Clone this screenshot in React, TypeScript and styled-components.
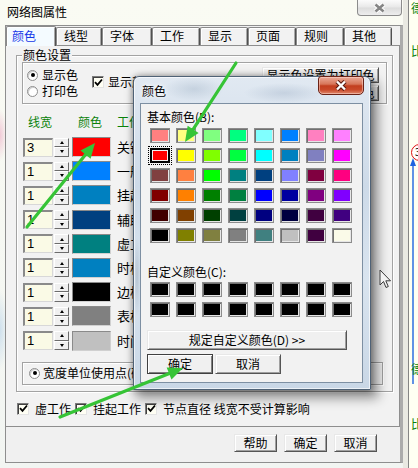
import React from "react";
import styled, { createGlobalStyle, css } from "styled-components";

const FONT = `"Noto Sans CJK SC", "Noto Sans", "DejaVu Sans", sans-serif`;

const GlobalStyle = createGlobalStyle`
  * { box-sizing: border-box; }
  html, body { margin: 0; padding: 0; }
  body { font-family: ${FONT}; font-size: 12px; color: #000; background: #F6F8F2; }
`;

const Screen = styled.div`
  position: relative;
  width: 418px;
  height: 468px;
  overflow: hidden;
  display: flex;
  align-items: flex-start;
  padding-left: 5px;
  font-family: ${FONT};
  font-size: 12px;
  line-height: 14px;
  background:
    radial-gradient(ellipse 7px 26px at 0px 135px, rgba(236, 170, 196, 0.6), transparent),
    radial-gradient(ellipse 8px 40px at 0px 330px, rgba(175, 205, 232, 0.55), transparent),
    linear-gradient(180deg, #FAFBF3, #F2F5F2);
`;

const MainWindow = styled.div`
  flex: none;
  width: 398px;
  height: 463px;
  display: flex;
  flex-direction: column;
`;

const TitleBar = styled.div`
  height: 25px;
  display: flex;
  align-items: flex-start;
  justify-content: space-between;
`;

const TitleText = styled.span`
  margin: 5px 0 0 2px;
  line-height: 14px;
`;

const InactiveClose = styled.div`
  width: 45px;
  height: 16px;
  margin-right: 1px;
  border: 1px solid #8C8C8C;
  border-top: none;
  border-radius: 0 0 4px 4px;
  background: linear-gradient(#FBFBFB, #E8E8E8 48%, #DCDCDC 52%, #EEEEEE);
  display: flex;
  align-items: center;
  justify-content: center;
`;

const Client = styled.div`
  height: 438px;
  display: flex;
  flex-direction: column;
  background: #F0F0F0;
  border-left: 1px solid #8E8E8E;
  border-top: 1px solid #8E8E8E;
  border-bottom: 1px solid #8E8E8E;
  border-right: 3px solid #ABABAB;
`;

const TabStrip = styled.div`
  height: 19px;
  display: flex;
  align-items: flex-end;
`;

const Tab = styled.div<{ $w: number; $active?: boolean }>`
  position: relative;
  flex: none;
  width: ${(p) => p.$w}px;
  height: ${(p) => (p.$active ? 20 : 18)}px;
  margin-bottom: ${(p) => (p.$active ? -1 : 0)}px;
  z-index: ${(p) => (p.$active ? 1 : 0)};
  padding: ${(p) => (p.$active ? 2 : 1)}px 0 0 ${(p) => (p.$active ? 5 : 7)}px;
  border: 1px solid #8A8A8A;
  border-right-color: #505050;
  border-bottom: none;
  border-radius: 2px 2px 0 0;
  box-shadow: inset 1px 1px #FFFFFF, inset -1px 0 #A8A8A8;
  background: ${(p) => (p.$active ? "#F4FBFF" : "#F2F2F2")};
  color: ${(p) => (p.$active ? "#1438E8" : "#000")};
  line-height: 14px;
`;

const TabPanel = styled.div`
  flex: none;
  height: 382px;
  display: flex;
  flex-direction: column;
  align-items: flex-start;
  padding: 9px 0 0 10px;
  border-top: 1px solid #8E8E8E;
  border-right: 1px solid #8E8E8E;
  border-bottom: 1px solid #8E8E8E;
  background: #F2F2F2;
`;

const etched = css`
  border: 1px solid #A3A3A3;
  box-shadow: inset 1px 1px #FFFFFF, 1px 1px #FFFFFF;
`;

const GroupBox = styled.div`
  ${etched};
  width: 377px;
  display: flex;
  flex-direction: column;
  padding-bottom: 6px;
`;

const GroupTitle = styled.span`
  align-self: flex-start;
  margin: -8px 0 0 5px;
  padding: 0 1px;
  background: #F2F2F2;
  line-height: 14px;
`;

const OptionsFrame = styled.div`
  ${etched};
  height: 42px;
  margin: 0 5px;
  display: grid;
  grid-template-columns: 65px 1fr 117px;
  padding: 4px 7px 0 4px;
`;

const RadioCol = styled.div`
  display: flex;
  flex-direction: column;
  gap: 4px;
  padding-top: 2px;
`;

const OptionLine = styled.div`
  height: 12px;
  display: flex;
  align-items: center;
  gap: 4px;
  white-space: nowrap;
  line-height: 12px;
`;

const CheckCol = styled.div`
  padding-top: 9px;
`;

const ButtonCol = styled.div`
  display: flex;
  flex-direction: column;
  gap: 2px;
`;

const RadioDot = styled.span<{ $on?: boolean }>`
  flex: none;
  width: 11px;
  height: 11px;
  border-radius: 50%;
  border: 1px solid #8E8E8E;
  background: #FFFFFF;
  box-shadow: inset 1px 1px #D0D0D0;
  display: flex;
  align-items: center;
  justify-content: center;
  &::after {
    content: "";
    width: 4px;
    height: 4px;
    border-radius: 50%;
    background: ${(p) => (p.$on ? "#000" : "transparent")};
  }
`;

const CheckBox = styled.span`
  flex: none;
  width: 12px;
  height: 12px;
  border: 1px solid;
  border-color: #7C7C7C #E4E4E4 #E4E4E4 #7C7C7C;
  box-shadow: inset 1px 1px #404040;
  background: #FFFFF4;
  display: flex;
  align-items: center;
  justify-content: center;
`;

const HeaderRow = styled.div`
  margin-top: 11px;
  padding-left: 11px;
  display: grid;
  grid-template-columns: 50px 39px auto;
  color: #0A820A;
  line-height: 13px;
`;

const RowList = styled.div`
  margin-top: 9px;
  display: flex;
  flex-direction: column;
  gap: 4.2px;
`;

const Row = styled.div`
  height: 20px;
  display: flex;
  align-items: center;
  padding-left: 6px;
`;

const NumBox = styled.div`
  width: 30px;
  height: 19px;
  border-style: solid;
  border-width: 2px 1px 1px 2px;
  border-color: #8A8A8A #D8D8D8 #D8D8D8 #8A8A8A;
  background: #FAFAE6;
  padding-left: 2px;
  font-family: "Liberation Sans", Arial, sans-serif;
  font-size: 13px;
  line-height: 16px;
`;

const Spin = styled.div`
  margin-left: 1px;
  width: 15px;
  height: 19px;
  display: flex;
  flex-direction: column;
`;

const SpinHalf = styled.div<{ $down?: boolean }>`
  flex: 1;
  background: #F0F0F0;
  border: 1px solid;
  border-color: #FFFFFF #6C6C6C #6C6C6C #FFFFFF;
  display: flex;
  align-items: center;
  justify-content: center;
  &::after {
    content: "";
    border-left: 2.5px solid transparent;
    border-right: 2.5px solid transparent;
    ${(p) => (p.$down ? "border-top: 3px solid #000;" : "border-bottom: 3px solid #000;")}
  }
`;

const ColorBox = styled.div<{ $c: string }>`
  margin-left: 3px;
  width: 39px;
  height: 20px;
  border: 1px solid;
  border-color: #8A8A8A #D0D0D0 #D0D0D0 #8A8A8A;
  background: ${(p) => p.$c};
`;

const RowLabel = styled.span`
  margin-left: 6px;
  font-size: 13px;
  white-space: nowrap;
`;

const WidthFrame = styled.div`
  ${etched};
  height: 23px;
  margin: 11px 9px 0 5px;
  display: flex;
  align-items: center;
  gap: 3px;
  padding-left: 6px;
  white-space: nowrap;
`;

const CheckRow = styled.div`
  margin: 11px 0 0 1px;
  height: 12px;
  display: flex;
  align-items: center;
  white-space: nowrap;
  line-height: 12px;
`;

const CheckItem = styled.span<{ $first?: boolean }>`
  display: flex;
  align-items: center;
  gap: 6px;
  margin-left: ${(p) => (p.$first ? 0 : 4)}px;
`;

const Footer = styled.div`
  flex: 1;
  display: flex;
  justify-content: flex-end;
  align-items: flex-start;
  gap: 7px;
  padding: 7px 23px 0 0;
`;

const Btn = styled.button<{ $w: number; $h?: number; $default?: boolean }>`
  flex: none;
  width: ${(p) => p.$w}px;
  height: ${(p) => p.$h ?? 18}px;
  padding: 0;
  font-family: ${FONT};
  font-size: 12px;
  line-height: 12px;
  color: #000;
  background: #F0F0F0;
  border: 1px solid;
  border-color: ${(p) => (p.$default ? "#404040" : "#E8E8E8 #555555 #555555 #E8E8E8")};
  box-shadow: ${(p) =>
    p.$default
      ? "inset 1px 1px #FFFFFF, inset -1px -1px #808080"
      : "inset 1px 1px #FFFFFF, inset -1px -1px #A0A0A0"};
  white-space: nowrap;
  overflow: hidden;
`;

const WideBtn = styled(Btn)`
  text-align: left;
  padding-left: 8px;
`;

/* Right-hand strip: part of the network diagram behind the dialog */
const DiagramStrip = styled.div`
  position: relative;
  flex: 1;
  height: 468px;
  background: #FFFFF2;
  box-shadow: inset 5px 0 0 #E9E9E2, inset 6px 0 0 #858585;
  overflow: hidden;
`;

const DiagramText = styled.span<{ $top: number }>`
  position: absolute;
  left: 8px;
  top: ${(p) => p.$top}px;
  color: #0A800A;
  font-size: 12px;
  line-height: 13px;
  white-space: nowrap;
`;

const NodeCircle = styled.div`
  position: absolute;
  left: 8px;
  top: 144px;
  width: 17px;
  height: 17px;
  border-radius: 50%;
  border: 1.5px solid #E01010;
  background: #FFFFFF;
  font-size: 10px;
  line-height: 14px;
  padding-left: 3px;
`;

const DiagramSvg = styled.svg`
  position: absolute;
  left: 0;
  top: 0;
`;

/* Colour picker dialog lying over the property sheet */
const ColorDialog = styled.div`
  position: absolute;
  left: 133px;
  top: 76px;
  width: 238px;
  height: 314px;
  border: 1px solid #4F6276;
  border-radius: 6px 6px 0 0;
  background:
    radial-gradient(ellipse 30px 12px at 60px 12px, rgba(150, 170, 190, 0.35), transparent),
    radial-gradient(ellipse 40px 10px at 150px 16px, rgba(140, 160, 185, 0.3), transparent),
    radial-gradient(ellipse 4px 40px at 3px 200px, rgba(120, 140, 160, 0.35), transparent),
    linear-gradient(180deg, #E1E9F2 0%, #CDDAE8 35%, #D9E4EF 65%, #C9D7E6 100%);
  box-shadow: 0 0 6px rgba(0, 0, 0, 0.35), 5px 6px 12px 2px rgba(0, 0, 0, 0.42),
    inset 0 0 0 1px rgba(255, 255, 255, 0.65);
  display: flex;
  flex-direction: column;
`;

const DialogTitleBar = styled.div`
  height: 26px;
  display: flex;
  align-items: flex-start;
  padding-left: 8px;
`;

const DialogTitle = styled.span`
  margin-top: 7px;
  line-height: 14px;
  text-shadow: 0 0 6px #FFFFFF, 0 0 3px #FFFFFF;
`;

const RedClose = styled.div`
  margin: -1px 6px 0 auto;
  width: 46px;
  height: 19px;
  border: 1px solid #6A2216;
  border-radius: 3px 3px 5px 5px;
  background: linear-gradient(180deg, #EBAA98 0%, #D77559 42%, #C23E1F 52%, #C9492A 75%, #E08A6E 100%);
  box-shadow: inset 0 0 0 1px rgba(255, 220, 210, 0.5);
  display: flex;
  align-items: center;
  justify-content: center;
`;

const DialogBody = styled.div`
  flex: 1;
  margin: 0 7px 6px 6px;
  background: #F2F2F2;
  border: 1px solid #7D8FA2;
  display: flex;
  flex-direction: column;
  align-items: flex-start;
  padding-left: 6px;
`;

const DialogLabel = styled.span<{ $gap: number }>`
  margin-top: ${(p) => p.$gap}px;
  line-height: 13px;
  white-space: nowrap;
`;

const SwatchGrid = styled.div<{ $gap: number }>`
  margin: ${(p) => p.$gap}px 0 0 3px;
  display: grid;
  grid-template-columns: repeat(8, 20px);
  grid-auto-rows: 15px;
  column-gap: 6px;
  row-gap: 5px;
`;

const Swatch = styled.div<{ $c: string; $sel?: boolean }>`
  background: ${(p) => p.$c};
  border: 1px solid ${(p) => (p.$sel ? "#000" : "#8C8C8C")};
  box-shadow: ${(p) =>
    p.$sel ? "inset 0 0 0 1px #000, inset 0 0 0 2px #F2F2F2" : "inset 1px 1px #707070, inset -1px -1px #E6E6E6"};
  outline: ${(p) => (p.$sel ? "1px dotted #000" : "none")};
  outline-offset: 1px;
`;

const DialogButtons = styled.div`
  margin-top: 4px;
  display: flex;
  gap: 2px;
`;

const Cursor = styled.svg`
  position: absolute;
  left: 379px;
  top: 269px;
`;

const Annotations = styled.svg`
  position: absolute;
  left: 0;
  top: 0;
  pointer-events: none;
`;

const basicColors = [
  ["#FF8080", "#FFFF80", "#80FF80", "#00FF80", "#80FFFF", "#0080FF", "#FF80C0", "#FF80FF"],
  ["#FF0000", "#FFFF00", "#80FF00", "#00FF40", "#00FFFF", "#0080C0", "#8080C0", "#FF00FF"],
  ["#804040", "#FF8040", "#00FF00", "#008080", "#004080", "#8080FF", "#800040", "#FF0080"],
  ["#800000", "#FF8000", "#008000", "#008040", "#0000FF", "#0000A0", "#800080", "#8000FF"],
  ["#400000", "#804000", "#004000", "#004040", "#000080", "#000040", "#400040", "#400080"],
  ["#000000", "#808000", "#808040", "#808080", "#408080", "#C0C0C0", "#400040", "#FAFAE8"],
];

const rows = [
  { w: "3", c: "#FF0000", l: "关键工作" },
  { w: "1", c: "#0080FF", l: "一般工作" },
  { w: "1", c: "#0080C0", l: "挂起工作" },
  { w: "1", c: "#004080", l: "辅助工作" },
  { w: "1", c: "#008080", l: "虚工作" },
  { w: "1", c: "#0080C0", l: "时标线" },
  { w: "1", c: "#000000", l: "边框线" },
  { w: "1", c: "#808080", l: "表格线" },
  { w: "1", c: "#C0C0C0", l: "时间刻度" },
];

const tabs = [
  { t: "颜色", w: 50 },
  { t: "线型", w: 46 },
  { t: "字体", w: 50 },
  { t: "工作", w: 48 },
  { t: "显示", w: 48 },
  { t: "页面", w: 48 },
  { t: "规则", w: 48 },
  { t: "其他", w: 48 },
];

const Check = () => (
  <svg width="9" height="9" viewBox="0 0 9 9">
    <path d="M1 4.2 L3.5 6.8 L8 1.5" fill="none" stroke="#000" strokeWidth="1.8" />
  </svg>
);

function Arrow({ x1, y1, x2, y2 }: { x1: number; y1: number; x2: number; y2: number }) {
  const dx = x2 - x1;
  const dy = y2 - y1;
  const len = Math.hypot(dx, dy);
  const ux = dx / len;
  const uy = dy / len;
  const hl = 15;
  const hw = 6.5;
  const bx = x2 - ux * hl;
  const by = y2 - uy * hl;
  const pts = `${x2},${y2} ${bx - uy * hw},${by + ux * hw} ${bx + uy * hw},${by - ux * hw}`;
  return (
    <g>
      <line x1={x1} y1={y1} x2={bx + ux * 3} y2={by + uy * 3} stroke="#36C436" strokeWidth="3.2" strokeLinecap="round" />
      <polygon points={pts} fill="#36C436" />
    </g>
  );
}

export default function App() {
  return (
    <>
      <GlobalStyle />
      <Screen>
        <MainWindow>
          <TitleBar>
            <TitleText>网络图属性</TitleText>
            <InactiveClose>
              <svg width="13" height="10" viewBox="0 0 13 10">
                <path d="M2.5 1.5 L10.5 8.5 M10.5 1.5 L2.5 8.5" stroke="#FFFFFF" strokeWidth="4.6" />
                <path d="M2.5 1.5 L10.5 8.5 M10.5 1.5 L2.5 8.5" stroke="#858585" strokeWidth="2.6" />
              </svg>
            </InactiveClose>
          </TitleBar>
          <Client>
            <TabStrip>
              {tabs.map((t, i) => (
                <Tab key={t.t} $w={t.w} $active={i === 0}>
                  {t.t}
                </Tab>
              ))}
            </TabStrip>
            <TabPanel>
              <GroupBox>
                <GroupTitle>颜色设置</GroupTitle>
                <OptionsFrame>
                  <RadioCol>
                    <OptionLine>
                      <RadioDot $on />
                      显示色
                    </OptionLine>
                    <OptionLine>
                      <RadioDot />
                      打印色
                    </OptionLine>
                  </RadioCol>
                  <CheckCol>
                    <OptionLine>
                      <CheckBox>
                        <Check />
                      </CheckBox>
                      显示颜色
                    </OptionLine>
                  </CheckCol>
                  <ButtonCol>
                    <Btn $w={117} $h={16}>显示色设置为打印色</Btn>
                    <Btn $w={117} $h={16}>打印色设置为显示色</Btn>
                  </ButtonCol>
                </OptionsFrame>
                <HeaderRow>
                  <span>线宽</span>
                  <span>颜色</span>
                  <span>工作</span>
                </HeaderRow>
                <RowList>
                  {rows.map((r, i) => (
                    <Row key={i}>
                      <NumBox>{r.w}</NumBox>
                      <Spin>
                        <SpinHalf />
                        <SpinHalf $down />
                      </Spin>
                      <ColorBox $c={r.c} />
                      <RowLabel>{r.l}</RowLabel>
                    </Row>
                  ))}
                </RowList>
                <WidthFrame>
                  <RadioDot $on />
                  宽度单位使用点(磅)
                </WidthFrame>
              </GroupBox>
              <CheckRow>
                <CheckItem $first>
                  <CheckBox>
                    <Check />
                  </CheckBox>
                  虚工作
                </CheckItem>
                <CheckItem>
                  <CheckBox>
                    <Check />
                  </CheckBox>
                  挂起工作
                </CheckItem>
                <CheckItem>
                  <CheckBox>
                    <Check />
                  </CheckBox>
                  节点直径 线宽不受计算影响
                </CheckItem>
              </CheckRow>
            </TabPanel>
            <Footer>
              <Btn $w={43}>帮助</Btn>
              <Btn $w={43}>确定</Btn>
              <Btn $w={43}>取消</Btn>
            </Footer>
          </Client>
        </MainWindow>

        <DiagramStrip>
          <DiagramText $top={1}>德</DiagramText>
          <DiagramText $top={30}>【王</DiagramText>
          <DiagramText $top={44}>比</DiagramText>
          <NodeCircle>3</NodeCircle>
          <DiagramSvg width="15" height="468" viewBox="0 0 15 468">
            <polygon points="10,158 7,166 13,166" fill="#1E64E0" />
            <line x1="10" y1="165" x2="10" y2="384" stroke="#1E64E0" strokeWidth="1.4" />
          </DiagramSvg>
          <DiagramText $top={278}>【第</DiagramText>
          <DiagramText $top={318}>【编</DiagramText>
          <DiagramText $top={362}>德</DiagramText>
          <DiagramText $top={403}>【王</DiagramText>
          <DiagramText $top={417}>比</DiagramText>
        </DiagramStrip>

        <ColorDialog>
          <DialogTitleBar>
            <DialogTitle>颜色</DialogTitle>
            <RedClose>
              <svg width="14" height="11" viewBox="0 0 14 11">
                <path d="M3 1.5 L11 9.5 M11 1.5 L3 9.5" stroke="#5A1A10" strokeWidth="4.4" />
                <path d="M3 1.5 L11 9.5 M11 1.5 L3 9.5" stroke="#FFFFFF" strokeWidth="2.4" />
              </svg>
            </RedClose>
          </DialogTitleBar>
          <DialogBody>
            <DialogLabel $gap={6}>基本颜色(B):</DialogLabel>
            <SwatchGrid $gap={5}>
              {basicColors.flatMap((row, r) =>
                row.map((c, i) => <Swatch key={`${r}-${i}`} $c={c} $sel={r === 1 && i === 0} />)
              )}
            </SwatchGrid>
            <DialogLabel $gap={22}>自定义颜色(C):</DialogLabel>
            <SwatchGrid $gap={4}>
              {Array.from({ length: 16 }).map((_, i) => (
                <Swatch key={i} $c="#000000" />
              ))}
            </SwatchGrid>
            <DialogButtons style={{ marginTop: 13 }}>
              <Btn $w={200} $h={20}>规定自定义颜色(D) &gt;&gt;</Btn>
            </DialogButtons>
            <DialogButtons>
              <Btn $w={66} $h={20} $default>确定</Btn>
              <Btn $w={66} $h={20}>取消</Btn>
            </DialogButtons>
          </DialogBody>
        </ColorDialog>

        <Cursor width="13" height="21" viewBox="0 0 13 21">
          <path d="M1 1 L1 16 L4.5 12.5 L7 18.5 L9.3 17.5 L6.8 11.8 L11.5 11.8 Z" fill="#F2F2F2" stroke="#3A3A3A" strokeWidth="1" strokeLinejoin="round" />
        </Cursor>

        <Annotations width="418" height="468" viewBox="0 0 418 468">
          <Arrow x1={27} y1={227} x2={95} y2={143} />
          <Arrow x1={236} y1={63} x2={185} y2={142} />
          <Arrow x1={60} y1={417} x2={183} y2={368} />
        </Annotations>
      </Screen>
    </>
  );
}
